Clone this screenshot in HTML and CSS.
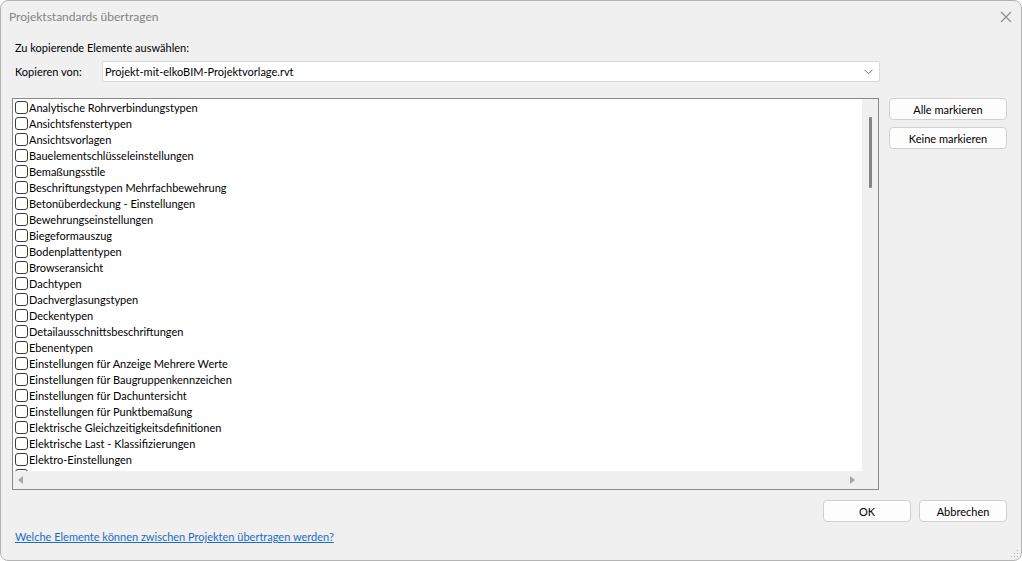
FILE: index.html
```html
<!DOCTYPE html>
<html lang="de">
<head>
    <meta charset="UTF-8">
    <title>Projektstandards übertragen</title>
    <link rel="stylesheet" href="styles.css">
</head>
<body>
    <div class="window">
        <div class="titlebar">
            <span class="title">Projektstandards übertragen</span>
            <svg class="close" width="12" height="12" viewBox="0 0 12 12">
                <path d="M1 1 L11 11 M11 1 L1 11" stroke="#8a8a8a" stroke-width="1.1" fill="none"/>
            </svg>
        </div>

        <div class="body">
            <p class="caption">Zu kopierende Elemente auswählen:</p>

            <div class="source-row">
                <label class="source-label">Kopieren von:</label>
                <div class="select">
                    <span>Projekt-mit-elkoBIM-Projektvorlage.rvt</span>
                    <svg width="9" height="6" viewBox="0 0 9 6">
                        <path d="M0.5 0.8 L4.5 4.8 L8.5 0.8" stroke="#707070" stroke-width="1" fill="none"/>
                    </svg>
                </div>
            </div>

            <div class="main-row">
                <div class="listbox">
                    <div class="items" id="items"></div>
                    <div class="vscroll"><div class="vthumb"></div></div>
                    <div class="hscroll">
                        <svg width="6" height="8" viewBox="0 0 6 8"><path d="M5 0 L5 8 L0 4 Z" fill="#a6a6a6"/></svg>
                        <svg width="6" height="8" viewBox="0 0 6 8"><path d="M0 0 L0 8 L5 4 Z" fill="#a6a6a6"/></svg>
                    </div>
                    <div class="corner"></div>
                </div>

                <div class="side-buttons">
                    <button class="btn">Alle markieren</button>
                    <button class="btn">Keine markieren</button>
                </div>
            </div>

            <div class="footer-buttons">
                <button class="btn btn-wide">OK</button>
                <button class="btn btn-wide">Abbrechen</button>
            </div>

            <a class="help-link" href="#">Welche Elemente können zwischen Projekten übertragen werden?</a>
        </div>

        <svg class="grip" width="8" height="8" viewBox="0 0 8 8">
            <rect x="6" y="0" width="1" height="1" fill="#b0b0b0"/>
            <rect x="3" y="3" width="1" height="1" fill="#b0b0b0"/>
            <rect x="6" y="3" width="1" height="1" fill="#b0b0b0"/>
            <rect x="0" y="6" width="1" height="1" fill="#b0b0b0"/>
            <rect x="3" y="6" width="1" height="1" fill="#b0b0b0"/>
            <rect x="6" y="6" width="1" height="1" fill="#b0b0b0"/>
        </svg>
    </div>

    <script>
        const names = [
            "Analytische Rohrverbindungstypen",
            "Ansichtsfenstertypen",
            "Ansichtsvorlagen",
            "Bauelementschlüsseleinstellungen",
            "Bemaßungsstile",
            "Beschriftungstypen Mehrfachbewehrung",
            "Betonüberdeckung - Einstellungen",
            "Bewehrungseinstellungen",
            "Biegeformauszug",
            "Bodenplattentypen",
            "Browseransicht",
            "Dachtypen",
            "Dachverglasungstypen",
            "Deckentypen",
            "Detailausschnittsbeschriftungen",
            "Ebenentypen",
            "Einstellungen für Anzeige Mehrere Werte",
            "Einstellungen für Baugruppenkennzeichen",
            "Einstellungen für Dachuntersicht",
            "Einstellungen für Punktbemaßung",
            "Elektrische Gleichzeitigkeitsdefinitionen",
            "Elektrische Last - Klassifizierungen",
            "Elektro-Einstellungen"
        ];

        const list = document.getElementById("items");
        for (let i = 0; i < names.length; i++) {
            const row = document.createElement("div");
            row.className = "item";
            row.innerHTML = '<span class="check"></span><span>' + names[i] + '</span>';
            list.appendChild(row);
        }
        // last row is only peeking out above the scrollbar
        const peek = document.createElement("div");
        peek.className = "item";
        peek.innerHTML = '<span class="check"></span>';
        list.appendChild(peek);
    </script>
</body>
</html>
```

FILE: styles.css
```css
* {
    box-sizing: border-box;
}

body {
    margin: 0;
    background-color: #ffffff;
    font-family: Lato, "Noto Sans", sans-serif;
    font-size: 11px;
    color: #000;
}

.window {
    position: relative;
    width: 1022px;
    height: 561px;
    background-color: #f0f0f0;
    border: 1px solid #b4b4b4;
    border-radius: 8px;
    overflow: hidden;
}

.titlebar {
    height: 31px;
    display: flex;
    align-items: center;
    justify-content: space-between;
    padding: 0 9px 0 8px;
}

.title {
    color: #838383;
    font-size: 12px;
}

.body {
    padding: 0 14px 0 11px;
}

p {
    margin: 0;
}

.caption {
    padding-left: 3px;
    height: 18px;
    line-height: 18px;
    margin-top: 7px;
}

.source-row {
    display: flex;
    align-items: center;
    margin-top: 4px;
}

.source-label {
    width: 90px;
    padding-left: 3px;
}

.select {
    width: 778px;
    height: 21px;
    background: #fff;
    border: 1px solid #d9d9d9;
    border-radius: 2px;
    display: flex;
    align-items: center;
    justify-content: space-between;
    padding: 0 6px 0 2px;
}

.main-row {
    display: flex;
    align-items: flex-start;
    margin-top: 16px;
}

.listbox {
    width: 868px;
    height: 392px;
    border: 1px solid #8a8a8a;
    display: grid;
    grid-template-columns: 1fr 16px;
    grid-template-rows: 1fr 18px;
}

.items {
    background: #fff;
    overflow: hidden;
    padding: 0 0 0 2px;
}

.item {
    height: 16px;
    display: flex;
    align-items: center;
    white-space: nowrap;
}

.check {
    width: 13px;
    height: 13px;
    border: 1px solid #3c3c3c;
    border-radius: 3px;
    background: #fff;
    margin-right: 1px;
    flex-shrink: 0;
}

.vscroll {
    background: #f0f0f0;
    padding-top: 18px;
    display: flex;
    justify-content: center;
}

.vthumb {
    width: 3px;
    height: 71px;
    background: #858585;
    border-radius: 1px;
}

.hscroll {
    background: #f0f0f0;
    display: flex;
    align-items: center;
    justify-content: space-between;
    padding: 0 6px 0 5px;
}

.corner {
    background: #f0f0f0;
}

.side-buttons {
    display: flex;
    flex-direction: column;
    gap: 7px;
    margin-left: 10px;
}

.btn {
    font-family: inherit;
    font-size: 11px;
    color: #000;
    background: #fdfdfd;
    border: 1px solid #d0d0d0;
    border-radius: 4px;
    height: 22px;
    width: 118px;
    padding: 0;
}

.footer-buttons {
    display: flex;
    justify-content: flex-end;
    gap: 8px;
    margin-top: 10px;
}

.btn-wide {
    width: 88px;
}

.help-link {
    display: inline-block;
    margin-top: 8px;
    padding-left: 3px;
    color: #1a6dc7;
    text-decoration: underline;
}

.grip {
    position: absolute;
    right: 2px;
    bottom: 2px;
}
```
